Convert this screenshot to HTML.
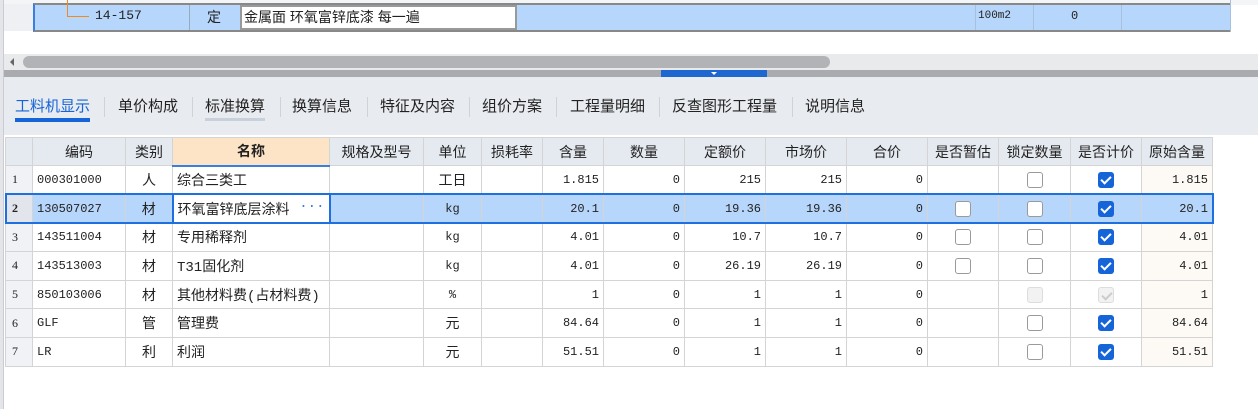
<!DOCTYPE html><html><head><meta charset="utf-8"><style>
*{margin:0;padding:0;box-sizing:border-box}
body{width:1258px;height:409px;overflow:hidden;background:#fff;font-family:"Liberation Sans","Noto Sans CJK SC",sans-serif;font-size:13px;color:#222;position:relative}
.a{position:absolute}
.num{font-family:"Liberation Mono","Noto Sans CJK SC",monospace;font-size:12px}
table{position:absolute;left:5px;top:137px;border-collapse:collapse;table-layout:fixed}
td{border:1px solid #d4d4d4;height:28.7px;padding:0 4px;white-space:nowrap;overflow:hidden}
thead td{background:#e5eaf1;text-align:center;font-size:14px;height:28px}
.r{text-align:right}.c{text-align:center}
.n{background:#f0f2f5;text-align:left;padding-left:6px;font-family:"Liberation Serif",serif}
.sel td{background:#b7d6fb}
.cb{display:inline-block;width:16px;height:16px;border:1px solid #9a9a9a;border-radius:3px;background:#fff;vertical-align:middle}
.ck{display:inline-block;width:16px;height:16px;border-radius:3px;background:#1565d8;vertical-align:middle;position:relative}
.ck:after{content:"";position:absolute;left:5px;top:2px;width:4px;height:8px;border:solid #fff;border-width:0 2px 2px 0;transform:rotate(45deg)}
.dis{border-color:#ddd;background:#f2f2f2}
.ckd{background:#f2f2f2;border:1px solid #ddd}.ckd:after{border-color:#ccc}
.orig{background:#fdfaf5}
.tab{position:absolute;top:95px;font-size:15px;color:#222}
.sep{position:absolute;top:97px;width:1px;height:20px;background:#cfd3d8}
</style></head><body>
<div class="a" style="left:0;top:0;width:1258px;height:5px;background:#f4f5f7"></div>
<div class="a" style="left:0;top:4px;width:33px;height:27px;background:#eef0f3"></div>
<div class="a" style="left:33px;top:3px;width:1197px;height:29px;background:#b7d6fb;border-top:2px solid #888;border-bottom:2px solid #888;border-left:2px solid #3a7fe0"></div>
<div class="a" style="left:67px;top:0;width:1px;height:16px;background:#f08a1e"></div>
<div class="a" style="left:67px;top:16px;width:22px;height:1px;background:#f08a1e"></div>
<div class="a num" style="left:95px;top:8px;font-size:13px">14-157</div>
<div class="a" style="left:189px;top:5px;width:1px;height:25px;background:#9ab"></div>
<div class="a" style="left:207px;top:7px;font-size:14px">定</div>
<div class="a" style="left:240px;top:5px;width:277px;height:25px;background:#fff;border:2px solid #999;padding-left:2px;font-size:14px;line-height:20px">金属面 环氧富锌底漆 每一遍</div>
<div class="a" style="left:975px;top:5px;width:1px;height:25px;background:#a9c0dc"></div>
<div class="a num" style="left:978px;top:10px;font-size:11px">100m2</div>
<div class="a" style="left:1033px;top:5px;width:1px;height:25px;background:#a9c0dc"></div>
<div class="a num" style="left:1071px;top:9px">0</div>
<div class="a" style="left:1121px;top:5px;width:1px;height:25px;background:#a9c0dc"></div>
<div class="a" style="left:1230px;top:0;width:1px;height:32px;background:#a9c0dc"></div>
<div class="a" style="left:0;top:0;width:4px;height:409px;background:#e3e5e8;border-right:1px solid #c9ccd0"></div>
<div class="a" style="left:4px;top:54px;width:1254px;height:16px;background:#e9eaec"></div>
<div class="a" style="left:10px;top:58px;width:0;height:0;border-top:4px solid transparent;border-bottom:4px solid transparent;border-right:4px solid #666"></div>
<div class="a" style="left:23px;top:56px;width:807px;height:12px;border-radius:6px;background:#b1b3b6"></div>
<div class="a" style="left:4px;top:70px;width:1254px;height:7px;background:#a9abae"></div>
<div class="a" style="left:661px;top:70px;width:106px;height:7px;background:#1e66d0"></div>
<div class="a" style="left:711px;top:72px;width:0;height:0;border-left:3px solid transparent;border-right:3px solid transparent;border-top:3px solid #fff"></div>
<div class="a" style="left:4px;top:77px;width:1254px;height:58px;background:#e8ebef"></div>
<div class="tab" style="left:15px;color:#1565d8">工料机显示</div>
<div class="a" style="left:15px;top:118px;width:75px;height:4px;background:#1565d8"></div>
<div class="sep" style="left:104px"></div>
<div class="tab" style="left:118px">单价构成</div>
<div class="sep" style="left:192px"></div>
<div class="tab" style="left:205px">标准换算</div>
<div class="a" style="left:205px;top:118px;width:60px;height:3px;background:#c8d0dc"></div>
<div class="sep" style="left:280px"></div>
<div class="tab" style="left:292px">换算信息</div>
<div class="sep" style="left:367px"></div>
<div class="tab" style="left:380px">特征及内容</div>
<div class="sep" style="left:469px"></div>
<div class="tab" style="left:482px">组价方案</div>
<div class="sep" style="left:556px"></div>
<div class="tab" style="left:570px">工程量明细</div>
<div class="sep" style="left:659px"></div>
<div class="tab" style="left:672px">反查图形工程量</div>
<div class="sep" style="left:792px"></div>
<div class="tab" style="left:805px">说明信息</div>
<table>
<colgroup><col style="width:27px"><col style="width:93px"><col style="width:47px"><col style="width:157px"><col style="width:94px"><col style="width:58px"><col style="width:61px"><col style="width:61px"><col style="width:81px"><col style="width:81px"><col style="width:81px"><col style="width:81px"><col style="width:71px"><col style="width:72px"><col style="width:71px"><col style="width:71px"></colgroup>
<thead><tr><td></td><td>编码</td><td>类别</td><td style="background:#fde4c6;font-weight:bold;border-bottom:2px solid #3a7fe0">名称</td><td>规格及型号</td><td>单位</td><td>损耗率</td><td>含量</td><td>数量</td><td>定额价</td><td>市场价</td><td>合价</td><td>是否暂估</td><td>锁定数量</td><td>是否计价</td><td>原始含量</td></tr></thead>
<tbody class="num">
<tr><td class="n">1</td><td>000301000</td><td class="c" style="font-size:14px">人</td><td style="font-size:14px">综合三类工</td><td></td><td class="c" style="font-size:14px">工日</td><td></td><td class="r">1.815</td><td class="r">0</td><td class="r">215</td><td class="r">215</td><td class="r">0</td><td></td><td class="c"><span class="cb"></span></td><td class="c"><span class="ck"></span></td><td class="r orig">1.815</td></tr>
<tr class="sel" style="outline:2px solid #1e6fe0;outline-offset:-1px"><td class="n" style="font-weight:bold;background:#e2e6ec">2</td><td>130507027</td><td class="c" style="font-size:14px">材</td><td style="font-size:14px;background:#fff;border:2px solid #1e6fe0">环氧富锌底层涂料 <span style="color:#3a7fe0;float:right">···</span></td><td></td><td class="c">kg</td><td></td><td class="r">20.1</td><td class="r">0</td><td class="r">19.36</td><td class="r">19.36</td><td class="r">0</td><td class="c"><span class="cb"></span></td><td class="c"><span class="cb"></span></td><td class="c"><span class="ck"></span></td><td class="r">20.1</td></tr>
<tr><td class="n">3</td><td>143511004</td><td class="c" style="font-size:14px">材</td><td style="font-size:14px">专用稀释剂</td><td></td><td class="c">kg</td><td></td><td class="r">4.01</td><td class="r">0</td><td class="r">10.7</td><td class="r">10.7</td><td class="r">0</td><td class="c"><span class="cb"></span></td><td class="c"><span class="cb"></span></td><td class="c"><span class="ck"></span></td><td class="r orig">4.01</td></tr>
<tr><td class="n">4</td><td>143513003</td><td class="c" style="font-size:14px">材</td><td style="font-size:14px">T31固化剂</td><td></td><td class="c">kg</td><td></td><td class="r">4.01</td><td class="r">0</td><td class="r">26.19</td><td class="r">26.19</td><td class="r">0</td><td class="c"><span class="cb"></span></td><td class="c"><span class="cb"></span></td><td class="c"><span class="ck"></span></td><td class="r orig">4.01</td></tr>
<tr><td class="n">5</td><td>850103006</td><td class="c" style="font-size:14px">材</td><td style="font-size:14px">其他材料费(占材料费)</td><td></td><td class="c">%</td><td></td><td class="r">1</td><td class="r">0</td><td class="r">1</td><td class="r">1</td><td class="r">0</td><td></td><td class="c"><span class="cb dis"></span></td><td class="c"><span class="ck ckd"></span></td><td class="r orig">1</td></tr>
<tr><td class="n">6</td><td>GLF</td><td class="c" style="font-size:14px">管</td><td style="font-size:14px">管理费</td><td></td><td class="c" style="font-size:14px">元</td><td></td><td class="r">84.64</td><td class="r">0</td><td class="r">1</td><td class="r">1</td><td class="r">0</td><td></td><td class="c"><span class="cb"></span></td><td class="c"><span class="ck"></span></td><td class="r orig">84.64</td></tr>
<tr><td class="n">7</td><td>LR</td><td class="c" style="font-size:14px">利</td><td style="font-size:14px">利润</td><td></td><td class="c" style="font-size:14px">元</td><td></td><td class="r">51.51</td><td class="r">0</td><td class="r">1</td><td class="r">1</td><td class="r">0</td><td></td><td class="c"><span class="cb"></span></td><td class="c"><span class="ck"></span></td><td class="r orig">51.51</td></tr>
</tbody></table>
</body></html>
